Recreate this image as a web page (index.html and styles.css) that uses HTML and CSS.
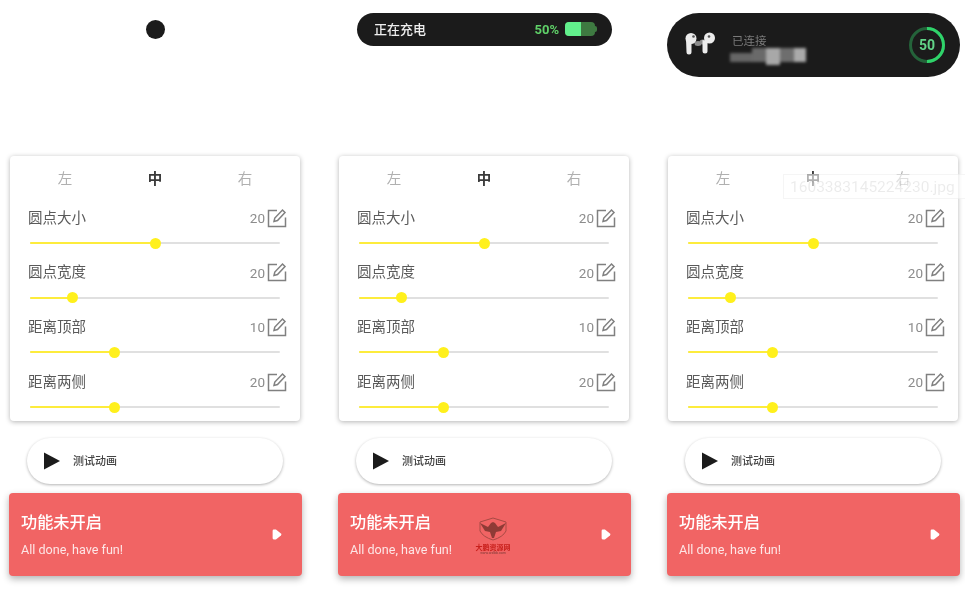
FILE: index.html
```html
<!DOCTYPE html>
<html lang="zh">
<head>
<meta charset="utf-8">
<title>灵动岛设置</title>
<link rel="stylesheet" href="styles.css">
</head>
<body>
<main class="page">
  <section class="column">
    <div class="island-slot"><div class="dot"></div></div>
    <div class="card">
      <div class="tabs"><span>左</span><span class="active">中</span><span>右</span></div>
      <div class="row"><div class="row-head"><span class="label">圆点大小</span><span class="value">20<svg class="edit" viewBox="0 0 20 20"><path d="M10 2.5H1.5V18.5H18.5V9.5"/><path d="M7 13.5L7.8 10L15.5 2L18 4.5L10.5 12.5Z"/></svg></span></div><div class="track"><div class="fill" style="width:50%"></div></div></div>
      <div class="row"><div class="row-head"><span class="label">圆点宽度</span><span class="value">20<svg class="edit" viewBox="0 0 20 20"><path d="M10 2.5H1.5V18.5H18.5V9.5"/><path d="M7 13.5L7.8 10L15.5 2L18 4.5L10.5 12.5Z"/></svg></span></div><div class="track"><div class="fill" style="width:16.8%"></div></div></div>
      <div class="row"><div class="row-head"><span class="label">距离顶部</span><span class="value">10<svg class="edit" viewBox="0 0 20 20"><path d="M10 2.5H1.5V18.5H18.5V9.5"/><path d="M7 13.5L7.8 10L15.5 2L18 4.5L10.5 12.5Z"/></svg></span></div><div class="track"><div class="fill" style="width:33.6%"></div></div></div>
      <div class="row"><div class="row-head"><span class="label">距离两侧</span><span class="value">20<svg class="edit" viewBox="0 0 20 20"><path d="M10 2.5H1.5V18.5H18.5V9.5"/><path d="M7 13.5L7.8 10L15.5 2L18 4.5L10.5 12.5Z"/></svg></span></div><div class="track"><div class="fill" style="width:33.6%"></div></div></div>
    </div>
    <button class="test-btn"><svg class="play" viewBox="0 0 18 18"><path d="M1 0.5L17 9L1 17.5Z"/></svg><span>测试动画</span></button>
    <div class="banner"><div class="banner-text"><div class="banner-title">功能未开启</div><div class="banner-sub">All done, have fun!</div></div><svg class="banner-play" viewBox="0 0 10 10"><path d="M1.5 1.5Q1.5 .5 2.5 .5H4.5L9 4Q10 5 9 6L4.5 9.5H2.5Q1.5 9.5 1.5 8.5Z"/></svg></div>
  </section>

  <section class="column">
    <div class="island-slot"><div class="pill-charge"><span class="charge-label">正在充电</span><span class="charge-pct">50%</span><span class="battery"><span class="battery-level"></span></span></div></div>
    <div class="card">
      <div class="tabs"><span>左</span><span class="active">中</span><span>右</span></div>
      <div class="row"><div class="row-head"><span class="label">圆点大小</span><span class="value">20<svg class="edit" viewBox="0 0 20 20"><path d="M10 2.5H1.5V18.5H18.5V9.5"/><path d="M7 13.5L7.8 10L15.5 2L18 4.5L10.5 12.5Z"/></svg></span></div><div class="track"><div class="fill" style="width:50%"></div></div></div>
      <div class="row"><div class="row-head"><span class="label">圆点宽度</span><span class="value">20<svg class="edit" viewBox="0 0 20 20"><path d="M10 2.5H1.5V18.5H18.5V9.5"/><path d="M7 13.5L7.8 10L15.5 2L18 4.5L10.5 12.5Z"/></svg></span></div><div class="track"><div class="fill" style="width:16.8%"></div></div></div>
      <div class="row"><div class="row-head"><span class="label">距离顶部</span><span class="value">10<svg class="edit" viewBox="0 0 20 20"><path d="M10 2.5H1.5V18.5H18.5V9.5"/><path d="M7 13.5L7.8 10L15.5 2L18 4.5L10.5 12.5Z"/></svg></span></div><div class="track"><div class="fill" style="width:33.6%"></div></div></div>
      <div class="row"><div class="row-head"><span class="label">距离两侧</span><span class="value">20<svg class="edit" viewBox="0 0 20 20"><path d="M10 2.5H1.5V18.5H18.5V9.5"/><path d="M7 13.5L7.8 10L15.5 2L18 4.5L10.5 12.5Z"/></svg></span></div><div class="track"><div class="fill" style="width:33.6%"></div></div></div>
    </div>
    <button class="test-btn"><svg class="play" viewBox="0 0 18 18"><path d="M1 0.5L17 9L1 17.5Z"/></svg><span>测试动画</span></button>
    <div class="banner"><div class="banner-text"><div class="banner-title">功能未开启</div><div class="banner-sub">All done, have fun!</div></div><svg class="banner-play" viewBox="0 0 10 10"><path d="M1.5 1.5Q1.5 .5 2.5 .5H4.5L9 4Q10 5 9 6L4.5 9.5H2.5Q1.5 9.5 1.5 8.5Z"/></svg>
      <div class="stamp"><svg class="stamp-logo" viewBox="0 0 28 24"><path class="stamp-shield" d="M14 1L27 5V14Q24 20 14 23Q4 20 1 14V5Z"/><path class="stamp-bird" d="M1 6L9 10L12 6L14 5L16 6L19 10L27 6L22 14L17 15L15 21H13L11 15L6 14Z"/></svg><span class="stamp-name">大鹏资源网</span><span class="stamp-url">www.wxlbb.com</span></div>
    </div>
  </section>

  <section class="column">
    <div class="island-slot"><div class="pill-pods">
      <svg class="pods" viewBox="0 0 31 23"><ellipse class="pod-tip" cx="13" cy="11.500" rx="3.500" ry="2.500"/><ellipse class="pod-tip" cx="18" cy="10" rx="3.500" ry="2.500"/><ellipse class="pod" cx="6" cy="6.500" rx="5.500" ry="5.500"/><path class="pod" d="M1 7H6.500V20Q6.500 22.500 4 22.500Q1.500 22.500 1.500 20Z"/><ellipse class="pod" cx="24.500" cy="6" rx="5.500" ry="5.500"/><path class="pod" d="M17.500 8L22.500 9V19Q22.500 21.500 20 21.500Q17.500 21.500 17.500 19Z"/><circle class="pod-mesh" cx="8.500" cy="4.500" r="1.300"/><circle class="pod-mesh" cx="24" cy="4.500" r="1.300"/></svg>
      <div class="pods-text"><div class="pods-status">已连接</div><div class="pods-name"><i></i><i></i><i></i><i></i><i></i></div></div>
      <div class="ring"><svg viewBox="0 0 36 36"><circle class="ring-bg" cx="18" cy="18" r="16.500"/><circle class="ring-fg" cx="18" cy="18" r="16.500" pathLength="100" stroke-dasharray="50 100"/></svg><span>50</span></div>
    </div></div>
    <div class="card">
      <div class="tabs"><span>左</span><span class="active">中</span><span>右</span></div>
      <div class="row"><div class="row-head"><span class="label">圆点大小</span><span class="value">20<svg class="edit" viewBox="0 0 20 20"><path d="M10 2.5H1.5V18.5H18.5V9.5"/><path d="M7 13.5L7.8 10L15.5 2L18 4.5L10.5 12.5Z"/></svg></span></div><div class="track"><div class="fill" style="width:50%"></div></div></div>
      <div class="row"><div class="row-head"><span class="label">圆点宽度</span><span class="value">20<svg class="edit" viewBox="0 0 20 20"><path d="M10 2.5H1.5V18.5H18.5V9.5"/><path d="M7 13.5L7.8 10L15.5 2L18 4.5L10.5 12.5Z"/></svg></span></div><div class="track"><div class="fill" style="width:16.8%"></div></div></div>
      <div class="row"><div class="row-head"><span class="label">距离顶部</span><span class="value">10<svg class="edit" viewBox="0 0 20 20"><path d="M10 2.5H1.5V18.5H18.5V9.5"/><path d="M7 13.5L7.8 10L15.5 2L18 4.5L10.5 12.5Z"/></svg></span></div><div class="track"><div class="fill" style="width:33.6%"></div></div></div>
      <div class="row"><div class="row-head"><span class="label">距离两侧</span><span class="value">20<svg class="edit" viewBox="0 0 20 20"><path d="M10 2.5H1.5V18.5H18.5V9.5"/><path d="M7 13.5L7.8 10L15.5 2L18 4.5L10.5 12.5Z"/></svg></span></div><div class="track"><div class="fill" style="width:33.6%"></div></div></div>
    </div>
    <button class="test-btn"><svg class="play" viewBox="0 0 18 18"><path d="M1 0.5L17 9L1 17.5Z"/></svg><span>测试动画</span></button>
    <div class="banner"><div class="banner-text"><div class="banner-title">功能未开启</div><div class="banner-sub">All done, have fun!</div></div><svg class="banner-play" viewBox="0 0 10 10"><path d="M1.5 1.5Q1.5 .5 2.5 .5H4.5L9 4Q10 5 9 6L4.5 9.5H2.5Q1.5 9.5 1.5 8.5Z"/></svg></div>
  </section>
  <div class="filename">1603383145224230.jpg</div>
</main>
</body>
</html>
```

FILE: styles.css
```css
* { box-sizing: border-box; }
html, body { margin: 0; height: 100%; background: #fff; overflow: hidden; }
body { font-family: Roboto, "Noto Sans CJK SC", sans-serif; color: #555; }

.page {
  position: relative;
  display: grid;
  grid-template-columns: repeat(3, 293px);
  column-gap: 36px;
  padding-left: 9px;
  width: 965px;
  height: 593px;
  filter: blur(0.5px);
}
.column { display: flex; flex-direction: column; align-items: stretch; }

.island-slot { height: 156px; padding-top: 13px; display: flex; justify-content: center; align-items: flex-start; }

.dot { width: 19px; height: 19px; margin-top: 7px; margin-right: 1px; border-radius: 50%; background: #1b1b1b; }

.pill-charge {
  width: 255px; height: 33px;
  border-radius: 17px; background: #1b1b1b;
  display: flex; align-items: center; padding: 0 17px;
}
.charge-label { color: #eee; font-size: 13px; font-weight: 500; flex: 1; margin-top: -2px; }
.charge-pct { color: #5fd068; font-size: 13px; font-weight: 700; margin-right: 6px; margin-top: -1px; }
.battery {
  position: relative; width: 30px; height: 14px; margin-top: -1px; border-radius: 4px; background: #3e7a41;
}
.battery::after { content: ""; position: absolute; right: -2px; top: 4px; width: 2px; height: 6px; background: #3e7a41; border-radius: 0 2px 2px 0; }
.battery-level { display: block; width: 16px; height: 14px; border-radius: 4px 0 0 4px; background: #62f08c; }

.pill-pods {
  width: 293px; height: 64px;
  border-radius: 32px; background: #1b1b1b;
  display: flex; align-items: center; padding: 0 15px 0 18px;
}
.pods { width: 31px; height: 23px; margin-top: -3px; flex: none; }
.pod { fill: #ececec; }
.pod-tip { fill: #8c8c8c; }
.pod-mesh { fill: #555; }
.pods-text { margin-left: 16px; flex: 1; }
.pods-status { color: #7a7a7a; font-size: 11.500px; line-height: 14px; margin-top: 7px; }
.pods-name { display: flex; height: 15px; margin-left: -2px; filter: blur(1.5px); }
.pods-name i { display: block; width: 14px; height: 14px; background: #8a8a8a; }
.pods-name i:nth-child(1) { background: #666; width: 22px; height: 9px; margin-top: 5px; }
.pods-name i:nth-child(2) { background: #6a6a6a; }
.pods-name i:nth-child(3) { background: #a8a8a8; height: 17px; }
.pods-name i:nth-child(4) { background: #6e6e6e; }
.pods-name i:nth-child(5) { background: #aaa; width: 12px; }
.ring { position: relative; width: 36px; height: 36px; }
.ring svg { display: block; width: 36px; height: 36px; transform: rotate(-90deg); }
.ring-bg, .ring-fg { fill: none; stroke-width: 3; }
.ring-bg { stroke: #24633a; }
.ring-fg { stroke: #2fd36a; }
.ring span { position: absolute; inset: 0; display: flex; align-items: center; justify-content: center; color: #62d488; font-size: 14px; font-weight: 700; }

.card {
  height: 265px; margin: 0 2px 0 1px;
  background: #fff; border-radius: 4px;
  box-shadow: 0 1px 5px rgba(0,0,0,.3);
  padding: 0 20px;
}
.tabs {
  display: grid; grid-template-columns: repeat(3, 90px);
  height: 46px; align-items: center; text-align: center;
  margin: 0 -10px; padding-bottom: 3px;
  font-size: 14.500px; color: #b0b0b0;
}
.tabs .active { color: #3a3a3a; font-weight: 700; }

.row { height: 54.700px; }
.row-head { display: flex; justify-content: space-between; align-items: center; height: 30px; margin-left: -2px; margin-right: -7px; }
.label { font-size: 14.500px; color: #5a5a5a; margin-top: -2px; }
.value { display: flex; align-items: center; font-size: 13.500px; color: #8c8c8c; margin-top: 2px; }
.edit { width: 20px; height: 20px; margin-left: 2px; margin-top: -1px; fill: none; stroke: #808080; stroke-width: 1.500; }

.track { position: relative; height: 2px; background: #e0e0e0; margin-top: 10px; border-radius: 1px; }
.fill { position: relative; height: 2px; background: #fdec3c; border-radius: 1px; }
.fill::after { content: ""; position: absolute; right: -5.500px; top: -4.500px; width: 11px; height: 11px; border-radius: 50%; background: #fff01c; }

.test-btn {
  display: flex; align-items: center;
  height: 46px; margin: 17px 19px 0 18px; padding: 0 0 0 16px;
  background: #fff; border: 0; border-radius: 23px;
  box-shadow: 0 1px 3px rgba(0,0,0,.3);
  font-family: inherit;
}
.play { width: 18px; height: 18px; fill: #1b1b1b; }
.test-btn span { margin-left: 12px; margin-top: -2px; font-size: 11px; font-weight: 500; color: #444; }

.banner {
  position: relative;
  display: flex; align-items: center; justify-content: space-between;
  height: 83px; margin-top: 9px; padding: 0 20px 0 12px;
  background: #f16464; border-radius: 4px;
  box-shadow: 0 3px 7px rgba(0,0,0,.3);
  color: #fff;
}
.banner-title { font-size: 16.200px; font-weight: 500; line-height: 20px; margin-top: 1px; }
.banner-sub { font-size: 12.600px; line-height: 16px; margin-top: 9px; color: #fde6e6; }
.banner-play { width: 11px; height: 11px; fill: #fff; }

.stamp { position: absolute; left: 137px; top: 24px; width: 36px; display: flex; flex-direction: column; align-items: center; }
.stamp-logo { width: 28px; height: 24px; }
.stamp-shield { fill: none; stroke: #a84a44; stroke-width: 1; }
.stamp-bird { fill: #8f3b36; }
.stamp-name { font-family: "Noto Sans CJK SC", sans-serif; font-size: 7px; line-height: 8px; color: #c8201c; font-weight: 700; white-space: nowrap; margin-top: 2px; }
.stamp-url { font-size: 3.500px; line-height: 5px; color: #7a3a36; white-space: nowrap; }

.filename {
  position: absolute; left: 783px; top: 174px; width: 182px; height: 25px;
  padding-left: 6px;
  border: 1px solid rgba(0,0,0,.04); border-right: 0;
  background: rgba(255,255,255,.6);
  color: rgba(0,0,0,.08); font-size: 15.500px; line-height: 24px; white-space: nowrap; overflow: hidden;
}
```
